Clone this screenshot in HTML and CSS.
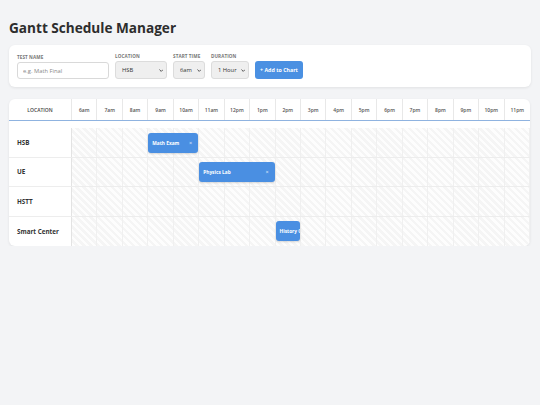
FILE: index.html
```html
<!DOCTYPE html>
<html>
<head>
<meta charset="utf-8">
<link rel="stylesheet" href="styles.css">
</head>
<body>
<h1 class="title">Gantt Schedule Manager</h1>
<div class="card form-card">
  <div class="field">
    <label class="lbl">Test Name</label>
    <input class="inp name" type="text" placeholder="e.g. Math Final">
  </div>
  <div class="field">
    <label class="lbl">Location</label>
    <div class="selwrap loc">
      <select class="sel"><option>HSB</option></select>
      <svg class="chev" viewBox="0 0 10 6" width="4.5" height="3"><path d="M1 1 L5 5 L9 1" fill="none" stroke="#333" stroke-width="1.8"/></svg>
    </div>
  </div>
  <div class="field">
    <label class="lbl">Start Time</label>
    <div class="selwrap start">
      <select class="sel"><option>6am</option></select>
      <svg class="chev" viewBox="0 0 10 6" width="4.5" height="3"><path d="M1 1 L5 5 L9 1" fill="none" stroke="#333" stroke-width="1.8"/></svg>
    </div>
  </div>
  <div class="field">
    <label class="lbl">Duration</label>
    <div class="selwrap dur">
      <select class="sel"><option>1 Hour</option></select>
      <svg class="chev" viewBox="0 0 10 6" width="4.5" height="3"><path d="M1 1 L5 5 L9 1" fill="none" stroke="#333" stroke-width="1.8"/></svg>
    </div>
  </div>
  <button class="add">+ Add to Chart</button>
</div>

<div class="card gantt">
  <div class="head">
    <div class="hcell loc-h">LOCATION</div>
    <div class="hcell">6am</div><div class="hcell">7am</div><div class="hcell">8am</div><div class="hcell">9am</div>
    <div class="hcell">10am</div><div class="hcell">11am</div><div class="hcell">12pm</div><div class="hcell">1pm</div>
    <div class="hcell">2pm</div><div class="hcell">3pm</div><div class="hcell">4pm</div><div class="hcell">5pm</div>
    <div class="hcell">6pm</div><div class="hcell">7pm</div><div class="hcell">8pm</div><div class="hcell">9pm</div>
    <div class="hcell">10pm</div><div class="hcell">11pm</div>
  </div>
  <div class="rows">
    <div class="row">
      <div class="rname">HSB</div>
      <div class="track">
        <div class="bar" style="left:calc(3 * 100% / 18); width:calc(2 * 100% / 18 - 1px)"><span class="bt">Math Exam</span><span class="x">×</span></div>
      </div>
    </div>
    <div class="row">
      <div class="rname">UE</div>
      <div class="track">
        <div class="bar" style="left:calc(5 * 100% / 18); width:calc(3 * 100% / 18 - 1px)"><span class="bt">Physics Lab</span><span class="x">×</span></div>
      </div>
    </div>
    <div class="row">
      <div class="rname">HSTT</div>
      <div class="track"></div>
    </div>
    <div class="row">
      <div class="rname">Smart Center</div>
      <div class="track">
        <div class="bar" style="left:calc(8 * 100% / 18); width:calc(1 * 100% / 18 - 1px)"><span class="bt">History Quiz</span><span class="x">×</span></div>
      </div>
    </div>
  </div>
</div>
</body>
</html>
```

FILE: styles.css
```css
* { box-sizing: border-box; }
body {
  margin: 0;
  padding: 0 9px;
  background: #f3f4f6;
  font-family: "Open Sans", "Liberation Sans", sans-serif;
  color: #333;
}
.title {
  margin: 18px 0 0;
  font-size: 13.6px;
  line-height: 19px;
  font-weight: 700;
  color: #2d2d2d;
}
.card {
  background: #fff;
  border-radius: 6px;
  box-shadow: 0 1px 3px rgba(0,0,0,0.08);
}
.form-card {
  margin-top: 8px;
  padding: 8px;
  display: flex;
  align-items: flex-end;
  gap: 6px;
}
.field { display: flex; flex-direction: column; }
.lbl {
  font-size: 4.6px;
  line-height: 6px;
  font-weight: 700;
  text-transform: uppercase;
  color: #777;
  margin-bottom: 2px;
  letter-spacing: 0.1px;
}
.inp {
  display: block;
  width: 92px;
  height: 17px;
  border: 1px solid #d9d9d9;
  border-radius: 3px;
  padding: 0 5px;
  font-family: inherit;
  font-size: 5.8px;
  color: #333;
  background: #fff;
}
.inp::placeholder { color: #888; }
.selwrap { position: relative; height: 18px; }
.sel {
  display: block;
  -webkit-appearance: none;
  appearance: none;
  width: 100%;
  height: 18px;
  border: 1px solid #dcdcdc;
  border-radius: 3px;
  background: #efefef;
  font-family: inherit;
  font-size: 5.8px;
  color: #333;
  padding: 0 6px;
  outline: none;
}
.chev {
  position: absolute;
  right: 4px;
  top: 7.5px;
  display: block;
  pointer-events: none;
}
.loc { width: 52px; }
.start { width: 32px; }
.dur { width: 38px; }
.add {
  display: block;
  height: 18px;
  width: 48px;
  border: none;
  border-radius: 3px;
  background: #4a90e2;
  color: #fff;
  font-family: inherit;
  font-size: 5.3px;
  font-weight: 700;
  padding: 0;
}
.gantt {
  margin-top: 12px;
  overflow: hidden;
  width: 521px;
}
.head {
  display: grid;
  grid-template-columns: 63px repeat(18, 1fr);
  height: 22px;
  border-bottom: 1.5px solid #8fb3e0;
}
.hcell {
  display: flex;
  align-items: center;
  justify-content: center;
  font-size: 5px;
  font-weight: 600;
  color: #555;
  border-right: 1px solid #e8e8e8;
}
.hcell:last-child { border-right: none; }
.loc-h { font-size: 5px; color: #444; }
.rows { padding-top: 7px; }
.row {
  display: grid;
  grid-template-columns: 63px 1fr;
  height: 29.5px;
  border-bottom: 1px solid #ededed;
}
.row:last-child { border-bottom: none; }
.rname {
  display: flex;
  align-items: center;
  padding-left: 8px;
  font-size: 6.3px;
  font-weight: 700;
  color: #333;
  border-right: 1px solid #e3e3e3;
}
.track {
  position: relative;
  background-image:
    repeating-linear-gradient(90deg, transparent 0, transparent calc(100% / 18 - 1px), #f0f0f0 calc(100% / 18 - 1px), #f0f0f0 calc(100% / 18)),
    repeating-linear-gradient(45deg, #fdfdfd 0, #fdfdfd 2.5px, #f5f5f5 2.5px, #f5f5f5 5px);
}
.bar {
  position: absolute;
  top: 4.5px;
  height: 20px;
  background: #4a8fe2;
  border-radius: 3px;
  box-shadow: 0 1px 2px rgba(0,0,0,0.15);
  color: #fff;
  display: flex;
  align-items: center;
  justify-content: space-between;
  padding: 0 4px;
  overflow: hidden;
  white-space: nowrap;
}
.bt { font-size: 4.8px; font-weight: 700; }
.x { font-size: 5.5px; opacity: 0.85; padding-right: 2px; margin-left: 4px; }
```
